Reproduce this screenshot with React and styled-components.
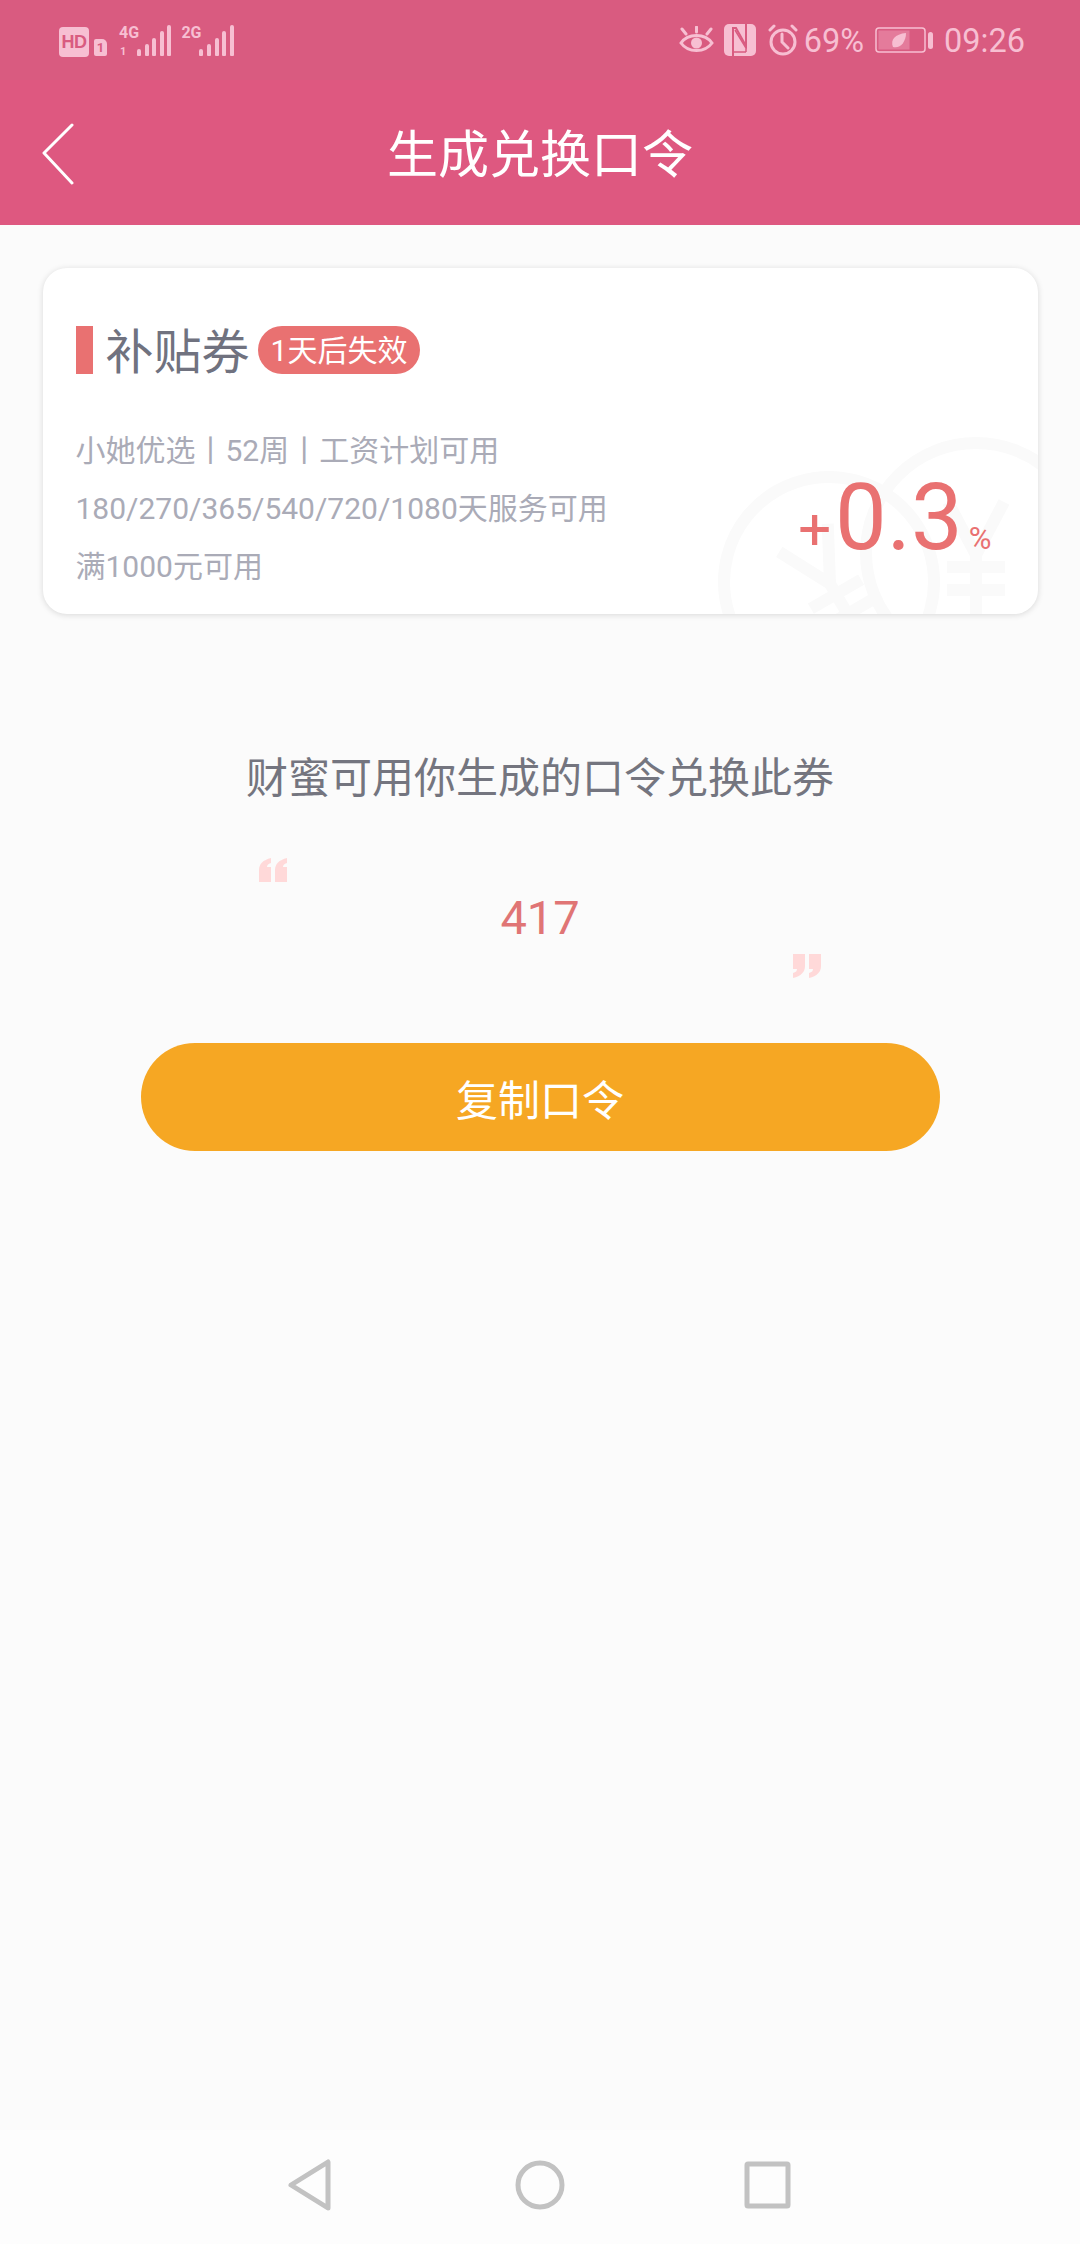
import React from "react";
import styled, { createGlobalStyle } from "styled-components";

const Global = createGlobalStyle`
  html, body { margin: 0; padding: 0; background: #fbfbfb; }
  body { font-family: Roboto, "Noto Sans CJK SC", sans-serif; }
`;
const Page = styled.div`
  width: 1080px; height: 2244px; display: flex; flex-direction: column; overflow: hidden; background: #fbfbfb;
`;
const StatusBar = styled.div`
  height: 80px; background: #d95b80; color: #f7bfd2; display: flex; justify-content: space-between; align-items: flex-start;
  padding: 24px 55px 0 59px; box-sizing: border-box;
`;
const StatusGroup = styled.div`display: flex; align-items: center; height: 32px;`;
const HdBadge = styled.span`
  width: 30px; height: 30px; margin-top: 3px; border-radius: 4px; background: #f7bfd2; color: #d95b80; font: 700 18px/30px "Liberation Sans", sans-serif;
  text-align: center; letter-spacing: -0.5px;
`;
const SimBadge = styled.span`
  width: 13px; height: 17px; margin: 14px 12px 0 5px; border-radius: 2px 5px 2px 2px; background: #f7bfd2; color: #d95b80;
  font: 700 13px/17px Roboto, sans-serif; text-align: center;
`;
const Signal = styled.span`
  position: relative; display: inline-flex; align-items: flex-end; gap: 3.6px; height: 31px; padding-left: 18px; margin: 1px 10px 0 0;
`;
const NetLabel = styled.span`
  position: absolute; left: 0; top: 0; font: 700 16px/15px "Liberation Sans Narrow", Roboto, sans-serif; color: #f7bfd2;
`;
const SimNo = styled.span`
  position: absolute; left: 1px; bottom: -1px; font: 700 11px/10px Roboto, sans-serif; color: #f7bfd2;
`;
const Bar = styled.i`display: block; width: 4px; border-radius: 2px 2px 1px 1px; height: ${p => p.$h}px; background: #f7bfd2;`;
const StatusText = styled.span`font-size: 32.5px; line-height: 34px; margin-top: 2px; margin-right: ${p => p.$mr || 0}px; color: #f7bfd2; white-space: nowrap;`;
const StatusIcon = styled.svg`display: block; flex: none; margin-right: ${p => p.$mr || 0}px;`;

const NavBar = styled.div`
  position: relative; height: 145px; background: #de5880; display: flex; align-items: center; justify-content: center;
  padding-top: 6px; box-sizing: border-box; color: #fff;
`;
const BackButton = styled.svg`position: absolute; left: 41px; top: 43px;`;
const Title = styled.h1`margin: 0; font-weight: 400; font-size: 51px; line-height: 60px; color: #fff;`;

const Main = styled.main`flex: 1; display: flex; flex-direction: column; align-items: center;`;
const Card = styled.section`
  position: relative; overflow: hidden; box-sizing: border-box; width: 995px; height: 346px; margin-top: 43px; border-radius: 24px; background: #fff;
  box-shadow: 0 1px 6px rgba(0,0,0,.14); padding: 58px 46px 0 33px;
`;
const Watermark = styled.svg`position: absolute; right: 0; bottom: 0;`;
const CardHead = styled.div`position: relative; display: flex; align-items: center; height: 48px;`;
const Marker = styled.span`width: 17px; height: 48px; background: #e97171;`;
const CardTitle = styled.span`margin-left: 13px; font-size: 48px; line-height: 48px; padding-top: 5px; color: #70727f;`;
const Expiry = styled.span`
  margin-left: 8px; height: 48px; padding: 0 13px; border-radius: 24px; background: #e97171; color: #fff; font-size: 30px; line-height: 50px; white-space: nowrap;
`;
const CardBody = styled.div`position: relative; display: flex; justify-content: space-between; align-items: flex-end; margin-top: 48px;`;
const Rules = styled.div`display: flex; flex-direction: column;`;
const Rule = styled.p`margin: 0; font-size: 30px; line-height: 58px; color: #aaabb7; white-space: nowrap;`;
const Rate = styled.div`color: #e97171; display: flex; align-items: baseline; margin-bottom: 21px; line-height: 1;`;
const RatePlus = styled.span`font-size: 58px; line-height: 92px;`;
const RateValue = styled.span`font-size: 92px; line-height: 92px; margin-left: 4px;`;
const RateUnit = styled.span`font-size: 31px; margin-left: 6px;`;

const Tip = styled.p`margin: 135px 0 0; font-size: 42px; line-height: 60px; color: #74757f;`;
const CodeBox = styled.div`width: 562px; margin-top: 49px; display: flex; flex-direction: column;`;
const Quote = styled.svg`display: block; align-self: ${p => p.$end ? "flex-end" : "flex-start"};`;
const Code = styled.div`margin: 8px 0 8px; text-align: center; font-size: 47px; line-height: 56px; color: #e07575;`;
const CopyButton = styled.button`
  margin-top: 65px; width: 799px; height: 108px; border: 0; border-radius: 54px; background: #f6a723; color: #fff; font-family: inherit; font-size: 42px;
`;

const BottomNav = styled.nav`
  height: 114px; background: #fdfdfd; display: flex; align-items: flex-start; padding-left: 284px;
`;
const NavKey = styled.svg`display: block; flex: none; margin-right: ${p => p.$mr || 0}px;`;

const QuoteMark = ({ end }) => (
  <Quote $end={end} width="28" height="24" viewBox="0 0 28 24" fill="#ffd9d9">
    {end ? (
      <path d="M0 0h12v12c0 6-4 10-12 12v-5c3-1 4-2 4-4H0zM16 0h12v12c0 6-4 10-12 12v-5c3-1 4-2 4-4h-4z" />
    ) : (
      <path d="M12 0v5c-3 1-4 2-4 4h4v15H0V12C0 6 4 2 12 0zM28 0v5c-3 1-4 2-4 4h4v15H16V12c0-6 4-10 12-12z" />
    )}
  </Quote>
);

const Yen = ({ r }) => (
  <g fill="none" stroke="#fafafa" strokeWidth="12">
    <circle cx="0" cy="0" r={r} />
    <path d="M-28 -51L0 2L28 -51M0 2V90M-29 14H29M-29 37H29" />
  </g>
);

export default function App() {
  return (
    <Page>
      <Global />
      <StatusBar>
        <StatusGroup>
          <HdBadge>HD</HdBadge>
          <SimBadge>1</SimBadge>
          <Signal>
            <NetLabel>4G</NetLabel>
            <SimNo>1</SimNo>
            <Bar $h={7} /><Bar $h={12} /><Bar $h={18} /><Bar $h={25} /><Bar $h={31} />
          </Signal>
          <Signal>
            <NetLabel>2G</NetLabel>
            <Bar $h={7} /><Bar $h={12} /><Bar $h={18} /><Bar $h={25} /><Bar $h={31} />
          </Signal>
        </StatusGroup>
        <StatusGroup>
          <StatusIcon $mr={10} width="35" height="28" viewBox="0 0 35 28" fill="none" stroke="#f7bfd2" strokeWidth="3">
            <path d="M2 17C9 7 26 7 33 17C26 27 9 27 2 17Z" />
            <circle cx="17.5" cy="17" r="5.5" fill="#f7bfd2" stroke="none" />
            <path d="M17.5 1V6M3 3L7 8M32 3L28 8" strokeLinecap="round" />
          </StatusIcon>
          <StatusIcon $mr={12} width="32" height="32" viewBox="0 0 32 32">
            <rect width="32" height="32" rx="5" fill="#f7bfd2" />
            <path d="M9 32V4H12L22 22V0" fill="none" stroke="#d95b80" strokeWidth="2" />
            <path d="M10 28L22 28M22 28V24L11 6" fill="none" stroke="#d95b80" strokeWidth="1.5" />
          </StatusIcon>
          <StatusIcon $mr={6} width="30" height="32" viewBox="0 0 30 32" fill="none" stroke="#f7bfd2" strokeWidth="3" strokeLinecap="round">
            <circle cx="15" cy="18" r="12" />
            <path d="M14 10V18L20 24M2 6L6 2M28 6L24 2" />
          </StatusIcon>
          <StatusText $mr={11}>69%</StatusText>
          <StatusIcon $mr={11} width="58" height="26" viewBox="0 0 58 26">
            <rect x="1" y="1" width="49" height="24" rx="3" fill="none" stroke="#f7bfd2" strokeWidth="1.5" />
            <rect x="3.5" y="3.5" width="31" height="19" fill="#e47b9b" />
            <path d="M18 20C15 13 20 7 31 6C31 15 25 22 18 20Z" fill="#f7bfd2" />
            <rect x="53" y="5" width="5" height="17" rx="2.5" fill="#f7bfd2" />
          </StatusIcon>
          <StatusText>09:26</StatusText>
        </StatusGroup>
      </StatusBar>
      <NavBar>
        <BackButton width="34" height="62" viewBox="0 0 34 62" fill="none" stroke="#fff" strokeWidth="3" strokeLinecap="round" strokeLinejoin="round">
          <path d="M31 2L3 30L31 60" />
        </BackButton>
        <Title>生成兑换口令</Title>
      </NavBar>
      <Main>
        <Card>
          <Watermark width="330" height="200" viewBox="0 0 330 200">
            <g transform="translate(121 168) rotate(-30)"><Yen r={105} /></g>
            <g transform="translate(268 139)"><Yen r={110} /></g>
          </Watermark>
          <CardHead>
            <Marker />
            <CardTitle>补贴券</CardTitle>
            <Expiry>1天后失效</Expiry>
          </CardHead>
          <CardBody>
            <Rules>
              <Rule>小她优选丨52周丨工资计划可用</Rule>
              <Rule>180/270/365/540/720/1080天服务可用</Rule>
              <Rule>满1000元可用</Rule>
            </Rules>
            <Rate>
              <RatePlus>+</RatePlus>
              <RateValue>0.3</RateValue>
              <RateUnit>%</RateUnit>
            </Rate>
          </CardBody>
        </Card>
        <Tip>财蜜可用你生成的口令兑换此券</Tip>
        <CodeBox>
          <QuoteMark />
          <Code>417</Code>
          <QuoteMark end />
        </CodeBox>
        <CopyButton>复制口令</CopyButton>
      </Main>
      <BottomNav>
        <NavKey $mr={181} width="50" height="114" viewBox="0 0 50 114" fill="none" stroke="#c2c2c2" strokeWidth="5" strokeLinejoin="round">
          <path d="M44 32V78L7 55Z" />
        </NavKey>
        <NavKey $mr={178} width="50" height="114" viewBox="0 0 50 114" fill="none" stroke="#c2c2c2" strokeWidth="5">
          <circle cx="25" cy="55" r="22" />
        </NavKey>
        <NavKey width="50" height="114" viewBox="0 0 50 114" fill="none" stroke="#c2c2c2" strokeWidth="5" strokeLinejoin="round">
          <rect x="4" y="34" width="41" height="42" rx="1" />
        </NavKey>
      </BottomNav>
    </Page>
  );
}
